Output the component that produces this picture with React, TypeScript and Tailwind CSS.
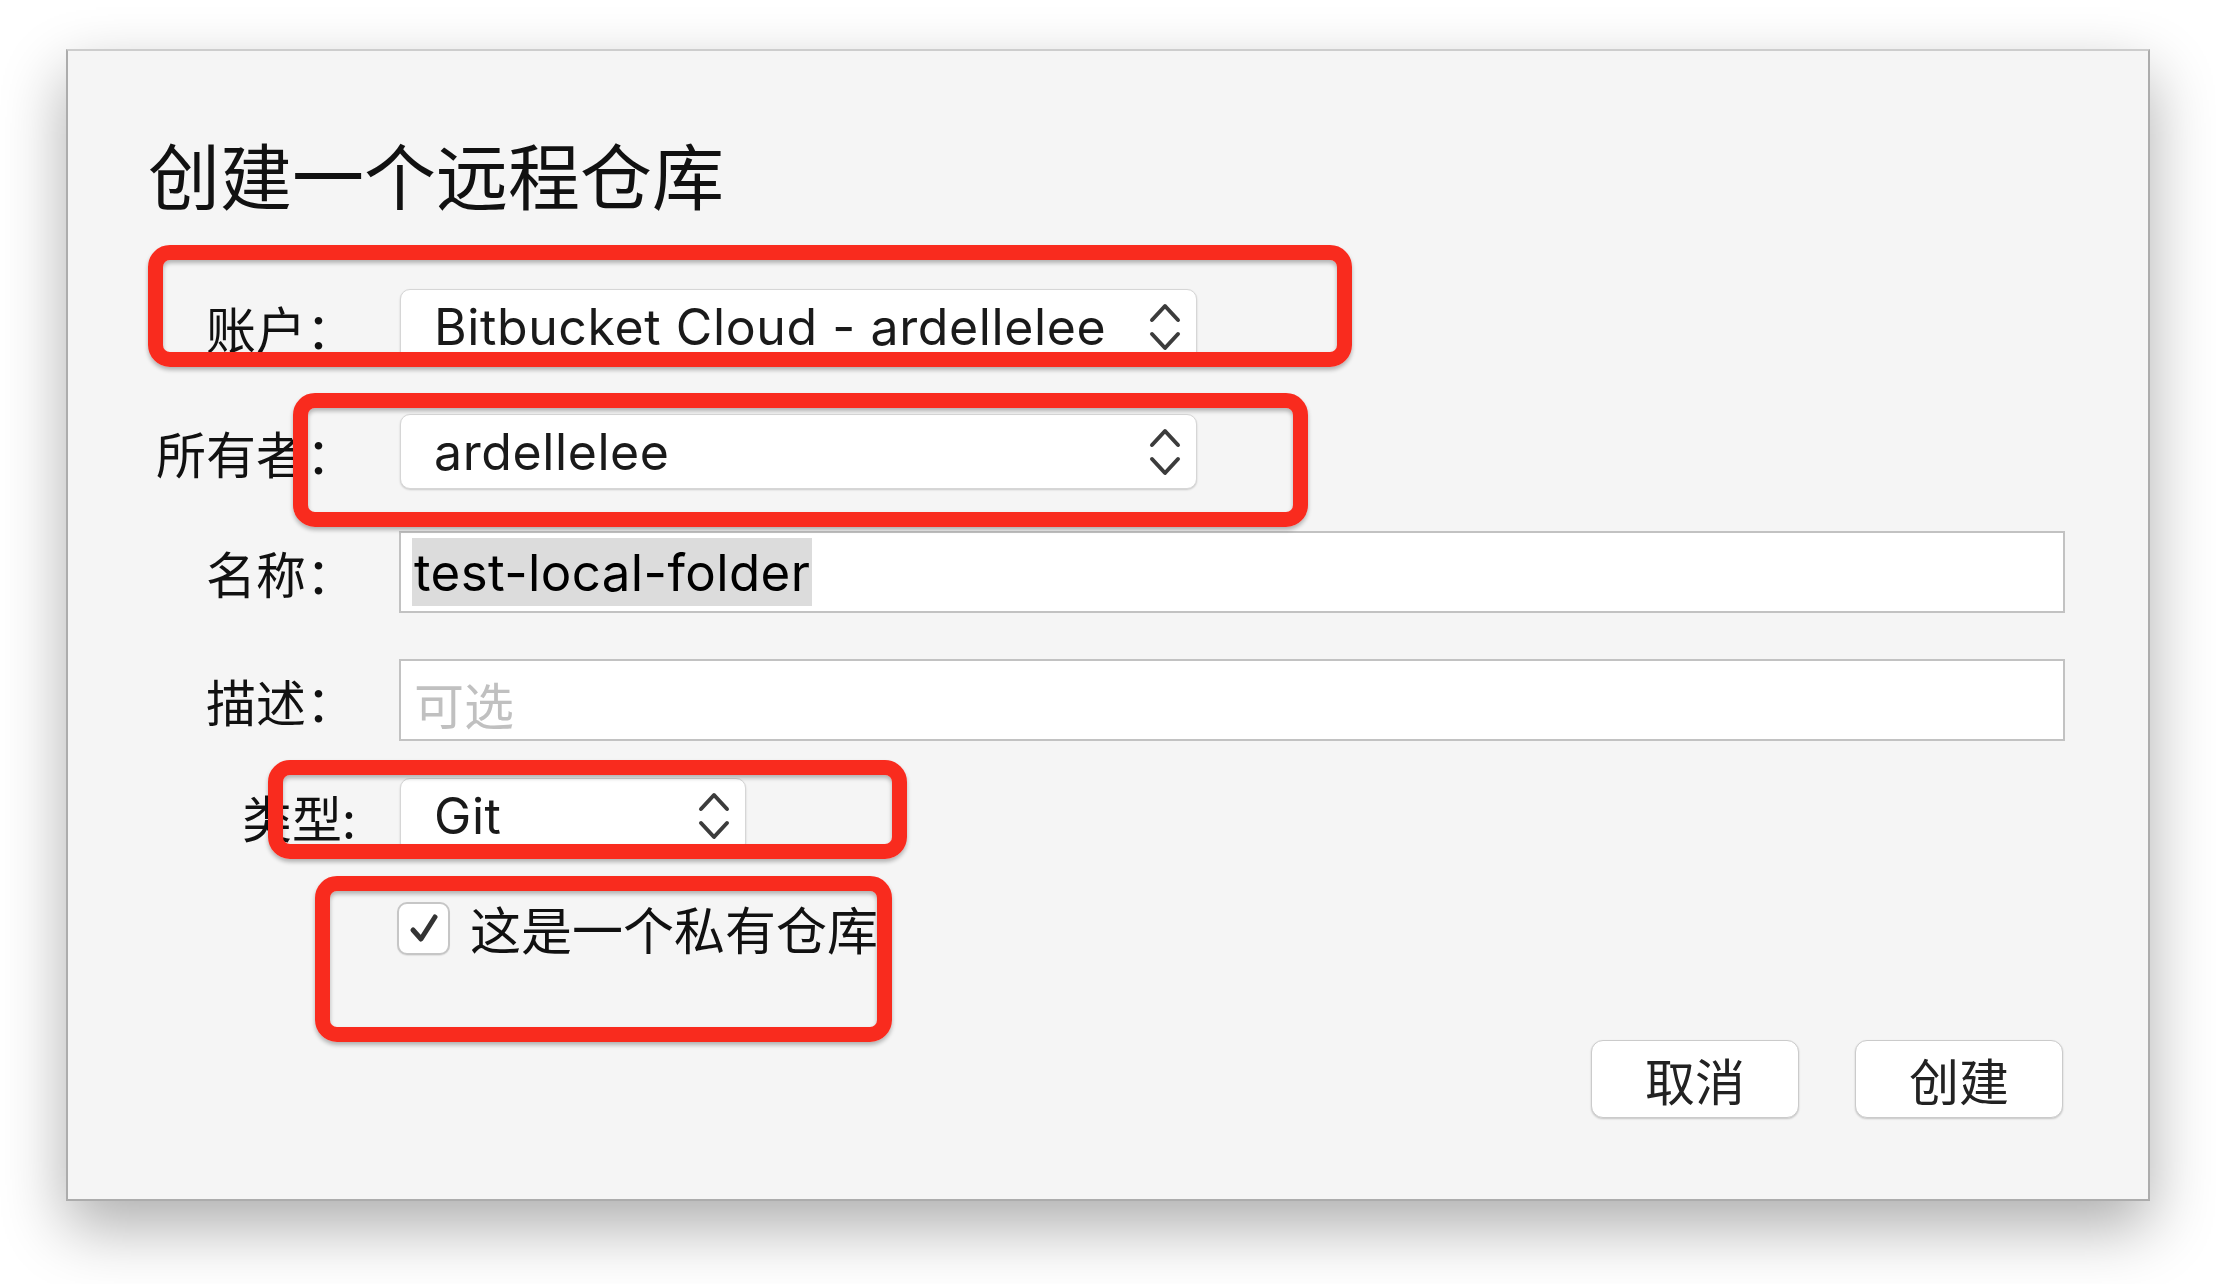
import React from "react";

const Chevrons = ({ className = "" }: { className?: string }) => (
  <svg className={className} width="32" height="50" viewBox="0 0 32 50" fill="none">
    <path d="M3 18 L16 4 L29 18" stroke="#3c3c3c" strokeWidth="4" strokeLinecap="round" strokeLinejoin="round" />
    <path d="M3 32 L16 46 L29 32" stroke="#3c3c3c" strokeWidth="4" strokeLinecap="round" strokeLinejoin="round" />
  </svg>
);

const Label = ({ children }: { children: React.ReactNode }) => (
  <div className="w-[332px] shrink-0 pr-[44px] text-right font-['Noto_Sans_CJK_SC',sans-serif] text-[50px] leading-[50px] text-[#111]">
    {children}
  </div>
);

const Select = ({ text, width }: { text: string; width: string }) => (
  <div
    className={`${width} h-[75px] flex items-center justify-between pl-[33px] pr-[15px] bg-white rounded-[10px] border border-[#d6d6d6] shadow-[0_1px_2px_rgba(0,0,0,0.18)]`}
  >
    <span className="font-['Inter','Noto_Sans_CJK_SC',sans-serif] text-[50px] leading-none text-[#1a1a1a] tracking-[0.6px]">
      {text}
    </span>
    <Chevrons />
  </div>
);

const RedBox = ({ cls }: { cls: string }) => (
  <div
    className={`absolute ${cls} border-[15px] border-[#f92b1e] rounded-[22px] shadow-[0_3px_4px_rgba(0,0,0,0.28),inset_0_3px_4px_rgba(0,0,0,0.28)]`}
  />
);

export default function App() {
  return (
    <div className="relative w-[2216px] h-[1284px] bg-white overflow-hidden pl-[66px] pt-[49px]">
      <div className="w-[2084px] h-[1152px] bg-[#f5f5f5] border-2 border-[#acacac] border-t-[#cdcdcd] shadow-[0_26px_60px_rgba(0,0,0,0.32)] flex flex-col">
        <div className="mt-[86px] pl-[80px] h-[72px] font-['Noto_Sans_CJK_SC',sans-serif] text-[72px] leading-[72px] text-[#111]">
          创建一个远程仓库
        </div>

        {/* 账户 */}
        <div className="mt-[80px] flex items-center h-[75px]">
          <Label>账户：</Label>
          <Select text="Bitbucket Cloud - ardellelee" width="w-[797px]" />
        </div>

        {/* 所有者 */}
        <div className="mt-[50px] flex items-center h-[75px]">
          <Label>所有者：</Label>
          <Select text="ardellelee" width="w-[797px]" />
        </div>

        {/* 名称 */}
        <div className="mt-[42px] flex items-center h-[82px]">
          <Label>名称：</Label>
          <div className="-ml-px w-[1666px] h-[82px] bg-white border-2 border-[#c2c2c2] flex items-center pl-[11px]">
            <span className="bg-[#dcdcdc] h-[68px] flex items-center px-[2px] font-['Inter','Noto_Sans_CJK_SC',sans-serif] text-[51px] leading-none text-black tracking-[0.4px]">
              test-local-folder
            </span>
          </div>
        </div>

        {/* 描述 */}
        <div className="mt-[46px] flex items-center h-[82px]">
          <Label>描述：</Label>
          <div className="-ml-px w-[1666px] h-[82px] bg-white border-2 border-[#c2c2c2] flex items-center pl-[13px]">
            <span className="font-['Noto_Sans_CJK_SC',sans-serif] text-[50px] leading-none text-[#c0c0c0] pt-[6px]">
              可选
            </span>
          </div>
        </div>

        {/* 类型 */}
        <div className="mt-[37px] flex items-center h-[75px]">
          <Label>类型:</Label>
          <Select text="Git" width="w-[346px]" />
        </div>

        {/* 私有 */}
        <div className="mt-[49px] flex items-center h-[53px] pl-[329px]">
          <div className="w-[53px] h-[53px] bg-white border-2 border-[#c6c6c6] rounded-[10px] flex items-center justify-center shadow-[0_1px_1px_rgba(0,0,0,0.08)]">
            <svg width="34" height="34" viewBox="0 0 34 34" fill="none">
              <path d="M6 18 L14 27 L28 5" stroke="#333" strokeWidth="5" strokeLinecap="round" strokeLinejoin="round" />
            </svg>
          </div>
          <span className="ml-[20px] font-['Noto_Sans_CJK_SC',sans-serif] text-[51px] leading-[51px] text-[#111]">
            这是一个私有仓库
          </span>
        </div>

        {/* buttons */}
        <div className="mt-[85px] flex justify-end gap-[56px] pr-[85px]">
          <div className="w-[208px] h-[78px] bg-white rounded-[12px] border border-[#cbcbcb] shadow-[0_1px_2px_rgba(0,0,0,0.2)] flex items-center justify-center font-['Noto_Sans_CJK_SC',sans-serif] text-[50px] leading-none text-[#222]">
            取消
          </div>
          <div className="w-[208px] h-[78px] bg-white rounded-[12px] border border-[#cbcbcb] shadow-[0_1px_2px_rgba(0,0,0,0.2)] flex items-center justify-center font-['Noto_Sans_CJK_SC',sans-serif] text-[50px] leading-none text-[#222]">
            创建
          </div>
        </div>
      </div>

      <RedBox cls="left-[148px] top-[245px] w-[1204px] h-[122px]" />
      <RedBox cls="left-[293px] top-[393px] w-[1015px] h-[134px]" />
      <RedBox cls="left-[268px] top-[760px] w-[639px] h-[99px]" />
      <RedBox cls="left-[315px] top-[876px] w-[577px] h-[166px]" />
    </div>
  );
}
